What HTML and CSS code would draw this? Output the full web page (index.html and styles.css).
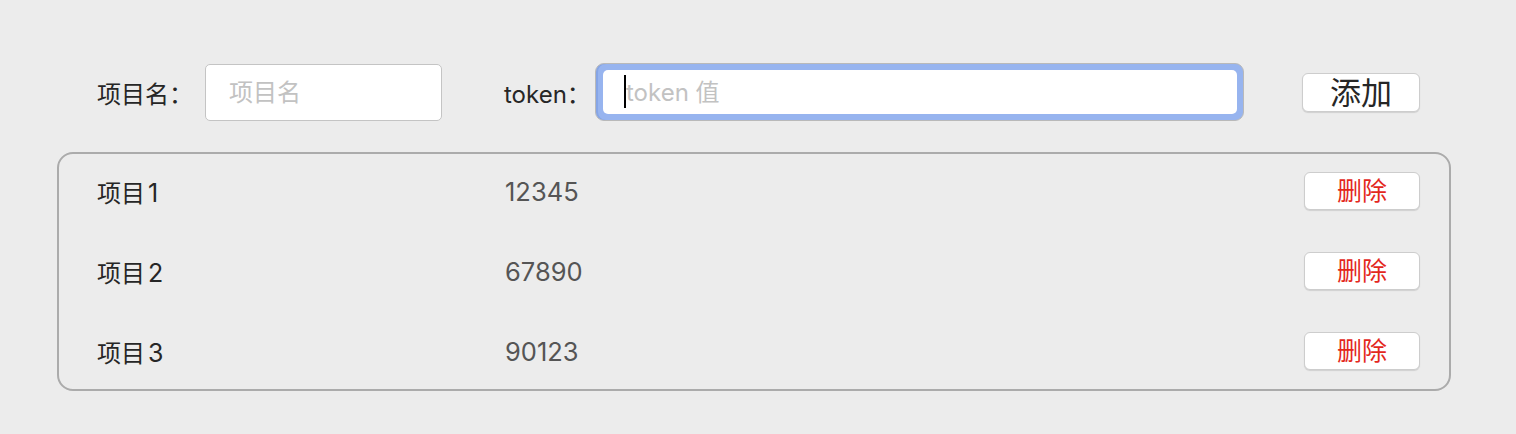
FILE: index.html
```html
<!DOCTYPE html>
<html lang="zh-CN">
<head>
<meta charset="utf-8">
<title>项目 token</title>
<link rel="stylesheet" href="styles.css">
</head>
<body>
<div class="page">
  <div class="toolbar">
    <label class="label label-name" for="name">项目名：</label>
    <input id="name" class="field" type="text" placeholder="项目名">
    <label class="label label-token" for="token">token：</label>
    <div class="focus-ring">
      <input id="token" class="field-focused" type="text" placeholder="token 值">
      <span class="caret"></span>
    </div>
    <button class="btn btn-add" type="button">添加</button>
  </div>
  <div class="list">
    <div class="row">
      <span class="name">项目<span class="num">1</span></span>
      <span class="token">12345</span>
      <button class="btn btn-del" type="button">删除</button>
    </div>
    <div class="row">
      <span class="name">项目<span class="num">2</span></span>
      <span class="token">67890</span>
      <button class="btn btn-del" type="button">删除</button>
    </div>
    <div class="row">
      <span class="name">项目<span class="num">3</span></span>
      <span class="token">90123</span>
      <button class="btn btn-del" type="button">删除</button>
    </div>
  </div>
</div>
</body>
</html>
```
FILE: styles.css
```css
* { box-sizing: border-box; }
html, body {
  margin: 0;
  background: #ececec;
}
body {
  font-family: "Inter", "Noto Sans CJK SC", sans-serif;
  font-size: 24px;
  color: #262626;
}
.page {
  padding-top: 63px;
}
.toolbar {
  display: flex;
  align-items: center;
  height: 58px;
  padding-left: 97px;
}
.label {
  flex: none;
  font-size: 24px;
  color: #262626;
  white-space: nowrap;
}
.label-name { width: 108px; }
.label-token { width: 91px; margin-left: 62px; }
.field {
  flex: none;
  width: 237px;
  height: 57px;
  border: 1px solid #c4c4c4;
  border-radius: 5px;
  background: #fff;
  padding: 0 0 0 23px;
  font: inherit;
  color: #262626;
  outline: none;
}
.field::placeholder, .field-focused::placeholder {
  color: #c2c2c2;
  opacity: 1;
}
.focus-ring {
  position: relative;
  flex: none;
  display: flex;
  width: 649px;
  height: 58px;
  padding: 6px 6px 6px 7px;
  border: 1px solid #b9b9b9;
  border-radius: 9px;
  background: #97b4ef;
  box-shadow: inset 2px 0 0 #86a5e6;
}
.field-focused {
  flex: 1;
  border: none;
  border-radius: 5px;
  background: #fff;
  padding: 0 0 0 23px;
  font: inherit;
  color: #262626;
  outline: none;
}
.caret {
  position: absolute;
  left: 28px;
  top: 11px;
  width: 2px;
  height: 33px;
  background: #000;
}
.btn {
  flex: none;
  font-family: "Inter", "Noto Sans CJK SC", sans-serif;
  background: #fff;
  border: 1px solid #cdcdcd;
  border-radius: 6px;
  box-shadow: 0 1px 1px rgba(0, 0, 0, 0.12);
  padding: 0;
  line-height: 1;
}
.btn-add {
  margin-left: 58px;
  width: 118px;
  height: 39px;
  font-size: 31px;
  color: #262626;
}
.list {
  margin: 31px 0 0 57px;
  width: 1394px;
  height: 239px;
  border: 2px solid #ababab;
  border-radius: 16px;
}
.row {
  display: flex;
  align-items: center;
  height: 80px;
  padding: 0 29px 0 38px;
}
.row:first-child { margin-top: -3px; }
.name {
  width: 408px;
  color: #262626;
}
.num {
  font-size: 25px;
  margin-left: 3px;
}
.token {
  flex: 1;
  font-size: 25.5px;
  color: #555;
}
.btn-del {
  width: 116px;
  height: 38px;
  font-size: 25px;
  color: #e3281d;
}
```
